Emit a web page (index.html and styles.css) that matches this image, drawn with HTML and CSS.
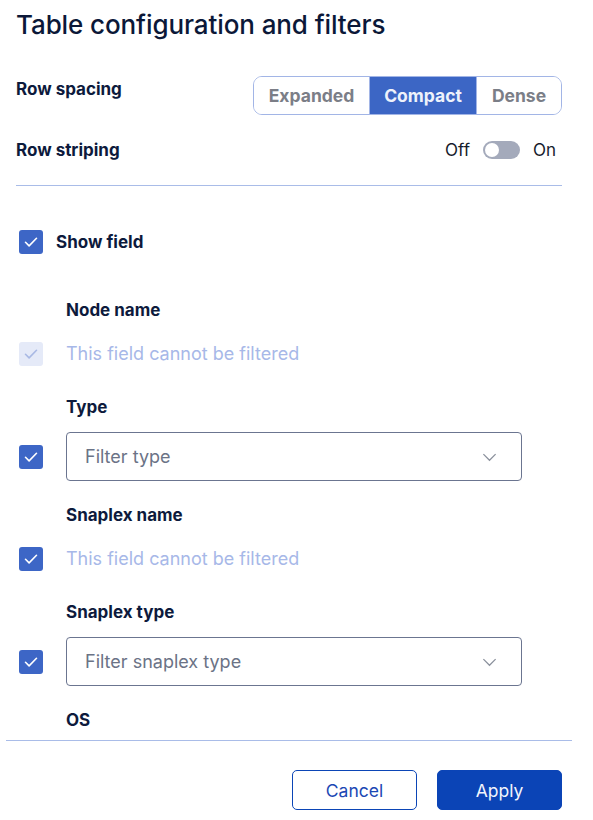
FILE: index.html
```html
<!DOCTYPE html>
<html lang="en">
<head>
<meta charset="utf-8">
<title>Table configuration and filters</title>
<link rel="stylesheet" href="styles.css">
</head>
<body>
<div class="panel">
  <div class="top">
    <h1 class="title">Table configuration and filters</h1>
    <div class="setting setting-spacing">
      <div class="setting-label">Row spacing</div>
      <div class="segmented">
        <button class="seg seg-expanded">Expanded</button>
        <button class="seg seg-compact active">Compact</button>
        <button class="seg seg-dense">Dense</button>
      </div>
    </div>
    <div class="setting setting-striping">
      <div class="setting-label">Row striping</div>
      <div class="toggle-wrap">
        <span class="toggle-text">Off</span>
        <span class="toggle"><span class="knob"></span></span>
        <span class="toggle-text">On</span>
      </div>
    </div>
    <div class="divider"></div>
  </div>

  <div class="fields">
    <div class="show-field">
      <span class="cb"><svg viewBox="0 0 24 24"><path d="M6.5 12.3l3.6 3.6 7.4-7.6"/></svg></span>
      <span class="show-label">Show field</span>
    </div>

    <div class="field">
      <div class="field-label">Node name</div>
      <div class="field-row row-text">
        <span class="cb cb-disabled"><svg viewBox="0 0 24 24"><path d="M6.5 12.3l3.6 3.6 7.4-7.6"/></svg></span>
        <span class="nofilter">This field cannot be filtered</span>
      </div>
    </div>

    <div class="field">
      <div class="field-label">Type</div>
      <div class="field-row row-select">
        <span class="cb"><svg viewBox="0 0 24 24"><path d="M6.5 12.3l3.6 3.6 7.4-7.6"/></svg></span>
        <div class="select">
          <span class="placeholder">Filter type</span>
          <svg class="chev" viewBox="0 0 16 10"><path d="M1.5 2l6.5 6.5 6.5-6.5"/></svg>
        </div>
      </div>
    </div>

    <div class="field">
      <div class="field-label">Snaplex name</div>
      <div class="field-row row-text">
        <span class="cb"><svg viewBox="0 0 24 24"><path d="M6.5 12.3l3.6 3.6 7.4-7.6"/></svg></span>
        <span class="nofilter">This field cannot be filtered</span>
      </div>
    </div>

    <div class="field">
      <div class="field-label">Snaplex type</div>
      <div class="field-row row-select">
        <span class="cb"><svg viewBox="0 0 24 24"><path d="M6.5 12.3l3.6 3.6 7.4-7.6"/></svg></span>
        <div class="select">
          <span class="placeholder">Filter snaplex type</span>
          <svg class="chev" viewBox="0 0 16 10"><path d="M1.5 2l6.5 6.5 6.5-6.5"/></svg>
        </div>
      </div>
    </div>

    <div class="field">
      <div class="field-label">OS</div>
    </div>
  </div>

  <div class="footer">
    <button class="btn btn-cancel">Cancel</button>
    <button class="btn btn-apply">Apply</button>
  </div>
</div>
</body>
</html>
```

FILE: styles.css
```css
* { box-sizing: border-box; }
html, body { margin: 0; padding: 0; background: #ffffff; }
body {
  font-family: "Inter", "Noto Sans", "Liberation Sans", sans-serif;
  color: #0d1a3c;
}
.panel { width: 593px; height: 820px; display: flex; flex-direction: column; }
.top { padding: 0 31px 0 16px; }
.title {
  margin: 0;
  padding-top: 10px;
  font-size: 26px;
  line-height: 30px;
  font-weight: 500;
  color: #0b1838;
  letter-spacing: -0.1px;
}
.setting { display: flex; justify-content: space-between; }
.setting-spacing { margin-top: 36px; align-items: flex-start; }
.setting-spacing .setting-label { padding-top: 1px; }
.setting-label { font-size: 17px; font-weight: 700; line-height: 24px; color: #0d1a3c; }
.segmented {
  display: flex;
  height: 39px;
  border: 1px solid #a2b5e6;
  border-radius: 9px;
  overflow: hidden;
}
.seg {
  border: 0;
  background: #fff;
  font-family: inherit;
  font-size: 17.5px;
  font-weight: 700;
  color: #7b7e87;
  padding: 0;
  cursor: pointer;
}
.seg-expanded { width: 115px; }
.seg-compact { width: 108px; border-left: 1px solid #a2b5e6; border-right: 1px solid #a2b5e6; }
.seg-dense { width: 84px; }
.seg.active { background: #3c66c5; color: #eef2fb; }
.setting-striping { margin-top: 23px; align-items: center; height: 24px; }
.toggle-wrap { display: flex; align-items: center; gap: 13px; margin-right: 6px; }
.toggle-text { font-size: 17px; color: #161c2c; line-height: 24px; }
.toggle {
  width: 37px; height: 18px; border-radius: 9px; background: #a4aabb;
  display: flex; align-items: center; padding: 0 2px;
}
.knob { width: 14px; height: 14px; border-radius: 50%; background: #fff; }
.divider { height: 1px; background: #a9bce8; margin-top: 23px; }

.fields { flex: 1; overflow: hidden; padding-left: 19px; padding-top: 44px; }
.show-field { display: flex; align-items: center; height: 24px; }
.show-label { margin-left: 13px; font-size: 17px; font-weight: 700; line-height: 24px; }
.cb {
  width: 24px; height: 24px; border-radius: 3px; background: #3d66c6;
  display: inline-flex; align-items: center; justify-content: center; flex: none;
}
.cb svg { width: 24px; height: 24px; fill: none; stroke: #ffffff; stroke-width: 1.6; stroke-linecap: round; stroke-linejoin: round; }
.cb-disabled { background: #e5eaf8; }
.cb-disabled svg { stroke: #a9b9e4; }

.field { padding-top: 44px; }
.field + .field { padding-top: 29px; }
.field-label { margin-left: 47px; font-size: 17px; font-weight: 700; line-height: 24px; }
.field-row { display: flex; align-items: center; gap: 23px; }
.row-text { margin-top: 20px; height: 24px; }
.row-select { margin-top: 13px; height: 49px; }
.field:has(.row-select) + .field { padding-top: 22px; }
.nofilter { font-size: 18px; color: #a7b8e8; line-height: 24px; }
.select {
  width: 456px; height: 49px;
  border: 1px solid #6b7590;
  border-radius: 4px;
  display: flex; align-items: center; justify-content: space-between;
  padding: 0 24px 0 18px;
}
.placeholder { font-size: 18px; color: #6b7386; }
.chev { width: 15px; height: 10px; fill: none; stroke: #8a909c; stroke-width: 1.3; }

.footer {
  border-top: 1px solid #a9bce8;
  margin: 0 21px 0 6px;
  height: 80px;
  display: flex; justify-content: flex-end; align-items: flex-start;
  gap: 20px;
  padding: 29px 10px 0 0;
}
.btn {
  width: 125px; height: 40px; border-radius: 5px;
  font-family: inherit; font-size: 17.5px; cursor: pointer;
}
.btn-cancel { background: #fff; border: 1px solid #0b45b6; color: #1b48b4; }
.btn-apply { background: #0b44b6; border: 1px solid #0b44b6; color: #f2f5fc; }
```
